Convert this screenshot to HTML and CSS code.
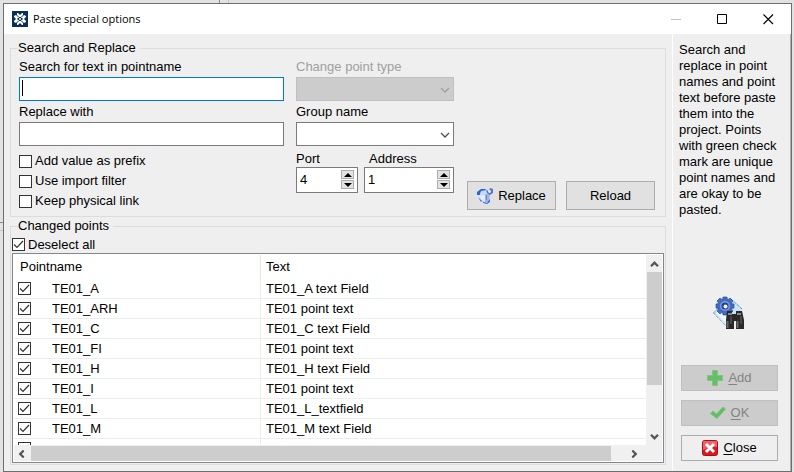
FILE: index.html
```html
<!DOCTYPE html>
<html lang="en">
<head>
<meta charset="utf-8">
<title>Paste special options</title>
<link rel="stylesheet" href="styles.css">
</head>
<body>
<svg class="sprites" aria-hidden="true">
  <symbol id="chevron" viewBox="0 0 10 6"><path d="M1 1l4 4 4-4" fill="none" stroke="currentColor" stroke-width="1.3"/></symbol>
  <symbol id="arrow" viewBox="0 0 9 6"><path d="M1 5.2l3.500-3.500 3.500 3.500" fill="none" stroke="currentColor" stroke-width="2.300"/></symbol>
</svg>
<div class="dialog" role="dialog" aria-labelledby="title">
  <header class="titlebar">
    <svg class="logo" viewBox="0 0 16 16"><rect width="16" height="16" fill="#05305c"/><path d="M5 2h1l2 2 2-2h1v2L9 6H7L5 4zM5 14h1l2-2 2 2h1v-2L9 10H7l-2 2zM2 5l2-1 2 2v1L5 8l1 1v1l-2 2-2-1v-1l2-2-2-2zM14 5l-2-1-2 2v1l1 1-1 1v1l2 2 2-1v-1l-2-2 2-2z" fill="#fff"/><path d="M6 6l4 4M10 6l-4 4" stroke="#c3d0de" stroke-width="1"/></svg>
    <h1 id="title">Paste special options</h1>
    <button class="win" aria-label="Minimize" disabled><svg viewBox="0 0 11 11"><path d="M0 5.500h10" stroke="#c4c4c4"/></svg></button>
    <button class="win" aria-label="Maximize"><svg viewBox="0 0 11 11"><path d="M.5 .5h9v9h-9z" fill="none" stroke="#000"/></svg></button>
    <button class="win" aria-label="Close window"><svg viewBox="0 0 11 11"><path d="M.5 .5l9.500 9.500M10 .5L.5 10" stroke="#000" stroke-width="1.100"/></svg></button>
  </header>
  <div class="content">
    <main class="main">
      <fieldset class="group">
        <legend>Search and Replace</legend>
        <div class="form">
          <div class="column">
            <label for="search">Search for text in pointname</label>
            <div class="searchbox"><input class="box focus" id="search" type="text"><span class="caret"></span></div>
            <label for="replace">Replace with</label>
            <input class="box" id="replace" type="text">
            <div class="checks">
              <label><input type="checkbox">Add value as prefix</label>
              <label><input type="checkbox">Use import filter</label>
              <label><input type="checkbox">Keep physical link</label>
            </div>
          </div>
          <div class="column">
            <label class="dim" for="type">Change point type</label>
            <div class="combo dim"><select class="box" id="type" disabled></select><svg><use href="#chevron"/></svg></div>
            <label for="groupname">Group name</label>
            <div class="combo"><select class="box" id="groupname"></select><svg><use href="#chevron"/></svg></div>
            <div class="numbers">
              <div class="number port">
                <label for="port">Port</label>
                <div class="spin"><input id="port" type="text" value="4">
                  <span><button aria-label="Increase port"><svg viewBox="0 0 8 4"><path d="M0 4l4-4 4 4z"/></svg></button><button aria-label="Decrease port"><svg viewBox="0 0 8 4"><path d="M0 0l4 4 4-4z"/></svg></button></span></div>
              </div>
              <div class="number address">
                <label for="address">Address</label>
                <div class="spin"><input id="address" type="text" value="1">
                  <span><button aria-label="Increase address"><svg viewBox="0 0 8 4"><path d="M0 4l4-4 4 4z"/></svg></button><button aria-label="Decrease address"><svg viewBox="0 0 8 4"><path d="M0 0l4 4 4-4z"/></svg></button></span></div>
              </div>
            </div>
          </div>
          <div class="actions">
            <button class="btn"><svg class="swap" viewBox="0 0 16 16"><path d="M4 5l5-2 4 3-1 8-4 1-4-3z" fill="#9fb4e8"/><path d="M4 6l4 1v7l-4-2z" fill="#e3eafc"/><path d="M0 4l4-3h5l-1 2-4 1-1 3H0z" fill="#2866df"/><path d="M4 3l6-1 1 3-4 2-4-1z" fill="#c6dafa"/><path d="M9 2l3 1 1-3 3 1v4l-3 2-3-2z" fill="#5279c8"/><circle cx="12.500" cy="3.500" r="1.400" fill="#eef4ff"/><path d="M1 9l4 4-1 1zM6 14l4 1 3-4v3l-3 2-4-1z" fill="#2c72ed"/><path d="M9.500 7v5" stroke="#7187bd"/></svg>Replace</button>
            <button class="btn">Reload</button>
          </div>
        </div>
      </fieldset>
      <fieldset class="group points">
        <legend>Changed points</legend>
        <label class="all"><input type="checkbox" checked>Deselect all</label>
        <div class="list">
          <div class="view">
            <table>
              <thead><tr><th>Pointname</th><th>Text</th></tr></thead>
              <tbody>
                <tr><td><label><input type="checkbox" checked>TE01_A</label></td><td>TE01_A text Field</td></tr>
                <tr><td><label><input type="checkbox" checked>TE01_ARH</label></td><td>TE01 point text</td></tr>
                <tr><td><label><input type="checkbox" checked>TE01_C</label></td><td>TE01_C text Field</td></tr>
                <tr><td><label><input type="checkbox" checked>TE01_FI</label></td><td>TE01 point text</td></tr>
                <tr><td><label><input type="checkbox" checked>TE01_H</label></td><td>TE01_H text Field</td></tr>
                <tr><td><label><input type="checkbox" checked>TE01_I</label></td><td>TE01 point text</td></tr>
                <tr><td><label><input type="checkbox" checked>TE01_L</label></td><td>TE01_L_textfield</td></tr>
                <tr><td><label><input type="checkbox" checked>TE01_M</label></td><td>TE01_M text Field</td></tr>
                <tr><td><label><input type="checkbox" checked></label></td><td></td></tr>
              </tbody>
            </table>
          </div>
          <div class="vbar"><svg><use href="#arrow"/></svg><i></i><svg class="down"><use href="#arrow"/></svg></div>
          <div class="hbar"><svg class="left"><use href="#arrow"/></svg><i></i><svg class="right"><use href="#arrow"/></svg></div>
        </div>
      </fieldset>
    </main>
    <aside class="side">
      <p>Search and replace in point names and point text before paste them into the project. Points with green check mark are unique point names and are okay to be pasted.</p>
      <svg class="picture" viewBox="0 0 32 34"><path d="M0 17L14 3h6l9 9v7L17 31z" fill="#c9e4f8"/><path d="M.5 17L14 3M18 3l11 10M.5 17L15 32" fill="none" stroke="#4778ad" stroke-dasharray="1 1"/><path d="M3 17l5-3 8 7-2 7z" fill="#eef9ff"/>
        <g fill="#426cc2" stroke="#223f8b" stroke-width=".6"><path d="M10 1h4l.5 3 2.500-2 3 3-2 2.500 3 .5v4l-3 .5 2 2.500-3 3-2.500-2-.5 3h-4l-.5-3-2.500 2-3-3 2-2.500-3-.5V8l3-.5-2-2.500 3-3 2.500 2z"/></g><circle cx="12" cy="10" r="5" fill="#7d9ce0"/><circle cx="12" cy="10" r="3.500" fill="#263e93"/><circle cx="12.500" cy="10.500" r="2" fill="#f1f6fb"/>
        <path d="M14 15h5v3h4v-3h6l2 9v9h-8v-8h-2v8h-8v-9z" fill="#292929"/><path d="M15 18h4M24 18h4" stroke="#888" stroke-width="2"/><path d="M14.500 25v7M24.500 25v7" stroke="#686868" stroke-width="2"/><path d="M18 20v8M28 20v8" stroke="#484848" stroke-width="2"/></svg>
      <div class="stack">
        <button class="btn" disabled><svg class="plus" viewBox="0 0 16 16"><path d="M5.500.5h5v5h5v5h-5v5h-5v-5h-5v-5h5z" fill="#68bd68" stroke="#80c580"/></svg><span><u>A</u>dd</span></button>
        <button class="btn" disabled><svg viewBox="0 0 16 16"><path d="M.5 8.500L3 6l3.500 3L13 2l2.500 2L7 13.500z" fill="#62bd62" stroke="#7bc47b"/></svg><span><u>O</u>K</span></button>
        <button class="btn"><svg viewBox="0 0 16 16"><rect x=".5" y=".5" width="15" height="15" rx="2" fill="#df1820" stroke="#a70f18"/><path d="M1 2q0-1 1-1h12q1 0 1 1v5Q8 6 1 10z" fill="#ed6267"/><path d="M4 4l8 8M12 4l-8 8" stroke="#fff" stroke-width="3"/></svg><span><u>C</u>lose</span></button>
      </div>
    </aside>
  </div>
</div>
</body>
</html>
```

FILE: styles.css
```css
* { box-sizing: border-box; }
body {
  margin: 0;
  padding: 3px 2px 0 3px;
  height: 100vh;
  overflow: hidden;
  font: 13px/16px "Liberation Sans", Arial, sans-serif;
  color: #000;
  background:
    linear-gradient(#8b8b8b, #8b8b8b) 219px 0 / 1px 3px no-repeat,
    linear-gradient(#c4c4c4, #c4c4c4) 228px 0 / 1px 3px no-repeat,
    linear-gradient(#8b8b8b, #8b8b8b) 0 222px / 3px 1px no-repeat,
    linear-gradient(#c4c4c4, #c4c4c4) 0 230px / 3px 1px no-repeat,
    #e2e2e2;
}
.sprites { position: absolute; width: 0; height: 0; }
button, input, select { font: inherit; color: inherit; margin: 0; }
svg { display: block; flex: none; }
.dialog {
  height: calc(100vh - 3px);
  display: flex;
  flex-direction: column;
  border: 1px solid #6e6e6e;
  background: #efefef;
}
.titlebar { display: flex; align-items: center; height: 30px; flex: none; padding-left: 8px; background: #fff; }
.logo { width: 16px; height: 16px; }
h1 { flex: 1; margin: 0 0 0 5px; font: 11px/16px "Open Sans", "Noto Sans", sans-serif; }
.win { width: 46px; height: 30px; padding: 0; border: 0; background: none; display: flex; align-items: center; justify-content: center; }
.win svg { width: 11px; height: 11px; }

.content { flex: 1; min-height: 0; display: flex; }
.main { flex: 1; min-width: 0; display: flex; flex-direction: column; padding: 6px; }
.group { min-width: 0; margin: 0; padding: 0 10px 5px 8px; border: 1px solid #dcdcdc; }
legend { margin-left: -1px; padding: 0 4px 0 0; }
.form { display: grid; grid-template-columns: minmax(0, 1fr) 158px 189px; column-gap: 12px; padding-top: 3px; }
.column label { display: block; }
.box { display: block; width: 100%; height: 24px; margin: 2px 0 3px; padding: 0 4px; border: 1px solid #7a7a7a; border-radius: 0; background: #fff; outline: 0; appearance: none; }
.box.focus { border-color: #0078d7; }
.searchbox { position: relative; }
.caret { position: absolute; left: 3px; top: 3px; width: 1px; height: 16px; background: #000; }
.combo { position: relative; color: #505050; }
.combo svg { position: absolute; right: 4px; top: 10px; width: 10px; height: 6px; }
label.dim { color: #a0a0a0; }
.combo.dim { color: #a0a0a0; }
.combo.dim .box { background: #ccc; border-color: #bfbfbf; opacity: 1; }
.checks { padding-top: 2px; }
.column .checks label, .all { display: flex; align-items: center; gap: 3px; }
.checks label { height: 20px; }
input[type="checkbox"] { appearance: none; flex: none; width: 13px; height: 13px; border: 1px solid #333; background: #fff; }
input[type="checkbox"]:checked { background: #fff url("data:image/svg+xml,%3Csvg xmlns='http://www.w3.org/2000/svg' viewBox='0 0 11 11'%3E%3Cpath d='M1 5.500l3 3L10 2' fill='none' stroke='%23333' stroke-width='1.200'/%3E%3C/svg%3E") center / 11px 11px no-repeat; }
.numbers { display: flex; gap: 6px; padding-top: 2px; }
.port { width: 62px; }
.address { flex: 1; min-width: 0; }
.address label { padding-left: 5px; }
.spin { display: flex; height: 26px; border: 1px solid #7a7a7a; background: #fff; padding: 2px 3px; }
.spin input { flex: 1; min-width: 0; width: 0; padding: 0; border: 0; background: none; outline: 0; height: 18px; }
.spin span { display: flex; flex-direction: column; gap: 1px; }
.spin button { width: 13px; height: 9px; padding: 0; display: flex; align-items: center; justify-content: center; border: 1px solid #adadad; background: #e3e3e3; }
.spin svg { width: 8px; height: 4px; }
.actions { display: flex; gap: 10px; align-self: end; padding: 0 0 1px 1px; }
.btn { display: flex; align-items: center; justify-content: center; gap: 5px; padding: 0; border: 1px solid #adadad; background: #e1e1e1; }
.actions .btn { flex: 1; height: 29px; }
.btn svg { width: 16px; height: 16px; }

.points { flex: 1; min-height: 0; display: flex; flex-direction: column; margin-top: 1px; padding: 2px 1px 1px; }
.points legend { margin-left: 6px; }
.all { height: 18px; }
.list { height: 210px; display: grid; grid-template: minmax(0, 1fr) 16px / minmax(0, 1fr) 16px; border: 1px solid #82868f; background: #fff; padding: 1px; }
.view { overflow: hidden; }
table { width: 100%; border-collapse: separate; border-spacing: 0; table-layout: fixed; }
th, td { padding: 0 0 0 5px; text-align: left; font-weight: normal; }
th { height: 24px; }
th:first-child { width: 247px; padding-left: 6px; border-right: 1px solid #e5e5e5; }
td { height: 20px; border-bottom: 1px solid #ededed; }
td:first-child { padding-left: 4px; border-right: 1px solid #ededed; }
td label { display: flex; align-items: center; gap: 21px; }
.vbar, .hbar { display: flex; background: #f0f0f0; color: #555; }
.vbar { flex-direction: column; align-items: center; }
.hbar { grid-column: 1 / 3; align-items: center; padding-right: 20px; }
.vbar svg, .hbar svg { width: 9px; height: 6px; margin: 6px 3px 5px; }
.vbar .down { margin-top: auto; transform: rotate(180deg); }
.left { transform: rotate(-90deg); }
.right { transform: rotate(90deg); }
.vbar i { width: 15px; height: 113px; background: #cdcdcd; }
.hbar i { flex: 1; height: 15px; margin: 0 16px 0 2px; background: #cdcdcd; }

.side { width: 119px; flex: none; display: flex; flex-direction: column; padding: 8px 8px 10px 6px; border-left: 1px solid #fff; border-right: 1px solid #b0b0b0; }
.side p { margin: 0; }
.picture { width: 32px; height: 34px; margin: auto auto 35px 34px; }
.stack { display: flex; flex-direction: column; gap: 9px; padding: 0 4px 0 2px; }
.stack .btn { height: 26px; }
.stack .btn:disabled { color: #838383; background: #ccc; border-color: #bfbfbf; }
.stack .btn:last-child { background: #efefef; }
u { text-underline-offset: 2px; }
```
